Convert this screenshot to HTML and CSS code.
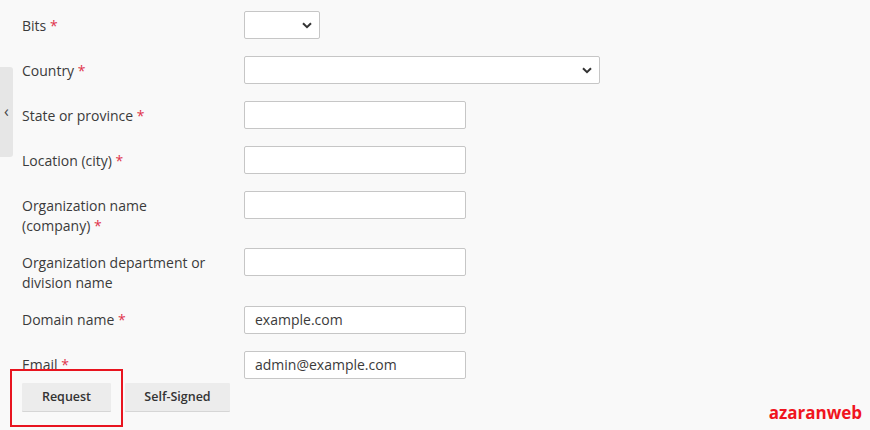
FILE: index.html
```html
<!DOCTYPE html>
<html lang="en">

<head>
    <meta charset="UTF-8">
    <meta name="viewport" content="width=device-width, initial-scale=1.0">
    <title>Certificate request</title>
    <link rel="stylesheet" href="styles.css">
</head>

<body>

    <div class="side-tab">&#8249;</div>

    <form class="cert-form">

        <div class="row">
            <label class="label required">Bits</label>
            <div class="select-wrap bits">
                <select class="field"><option></option></select>
                <svg class="chevron" width="10" height="7" viewBox="0 0 10 7"><path d="M1 1.2 5 5.2 9 1.2" fill="none" stroke="#333" stroke-width="2"/></svg>
            </div>
        </div>

        <div class="row">
            <label class="label required">Country</label>
            <div class="select-wrap country">
                <select class="field"><option></option></select>
                <svg class="chevron" width="10" height="7" viewBox="0 0 10 7"><path d="M1 1.2 5 5.2 9 1.2" fill="none" stroke="#333" stroke-width="2"/></svg>
            </div>
        </div>

        <div class="row">
            <label class="label required">State or province</label>
            <input class="field text" type="text">
        </div>

        <div class="row">
            <label class="label required">Location (city)</label>
            <input class="field text" type="text">
        </div>

        <div class="row">
            <label class="label required">Organization name (company)</label>
            <input class="field text" type="text">
        </div>

        <div class="row">
            <label class="label">Organization department or division name</label>
            <input class="field text" type="text">
        </div>

        <div class="row">
            <label class="label required">Domain name</label>
            <input class="field text" type="text" value="example.com">
        </div>

        <div class="row last">
            <label class="label required">Email</label>
            <input class="field text" type="text" value="admin@example.com">
        </div>

        <div class="buttons">
            <button type="button" class="btn request">Request</button>
            <button type="button" class="btn">Self-Signed</button>
        </div>

    </form>

    <div class="highlight"></div>
    <div class="brand">azaranweb</div>

</body>

</html>
```

FILE: styles.css
```css
:root {
    --page-bg: #f9f9f9;
    --text: #3b3b3b;
    --border: #c6c6c6;
    --req: #e0344c;
}

* {
    margin: 0px;
    padding: 0px;
    box-sizing: border-box;
}

body {
    background-color: var(--page-bg);
    color: var(--text);
    font-family: "Open Sans", "Noto Sans", sans-serif;
    font-size: 14px;
    width: 870px;
    height: 430px;
    overflow: hidden;
    position: relative;
}

.cert-form {
    padding: 11px 0 0 22px;
}

.row {
    display: flex;
    align-items: flex-start;
    margin-bottom: 17.1px;
}

.row.last {
    margin-bottom: 4px;
}

.label {
    width: 196px;
    margin-right: 26px;
    padding-top: 4.5px;
    margin-bottom: -4.5px;
    line-height: 20px;
}

.required::after {
    content: " *";
    color: var(--req);
}

.field {
    height: 28px;
    background-color: #fff;
    border: 1px solid var(--border);
    border-radius: 2px;
    font-family: inherit;
    font-size: 14px;
    color: var(--text);
    outline: none;
}

.text {
    width: 222px;
    padding: 0 10px;
}

.select-wrap {
    position: relative;
}

.select-wrap select {
    appearance: none;
    width: 100%;
}

.bits {
    width: 76px;
}

.country {
    width: 356px;
}

.chevron {
    position: absolute;
    right: 8px;
    top: 11px;
}

.buttons {
    display: flex;
    gap: 14px;
}

.btn {
    height: 28px;
    border: none;
    border-radius: 1px;
    background-color: #ececec;
    box-shadow: 0 1px 0 #d6d6d6;
    font-family: inherit;
    font-size: 12.5px;
    font-weight: 600;
    color: #333;
}

.request {
    width: 89px;
}

.btn + .btn {
    width: 105px;
}

.side-tab {
    position: absolute;
    left: 0;
    top: 67px;
    width: 13px;
    height: 90px;
    background-color: #e6e6e6;
    border-radius: 0 3px 3px 0;
    color: #444;
    font-size: 16px;
    line-height: 88px;
    text-align: center;
}

.highlight {
    position: absolute;
    left: 10px;
    top: 369px;
    width: 113px;
    height: 58px;
    border: 2px solid #e8141f;
}

.brand {
    position: absolute;
    right: 8px;
    bottom: 6px;
    color: #f0141e;
    font-family: "Open Sans", sans-serif;
    font-size: 17px;
    font-weight: 700;
}
```
